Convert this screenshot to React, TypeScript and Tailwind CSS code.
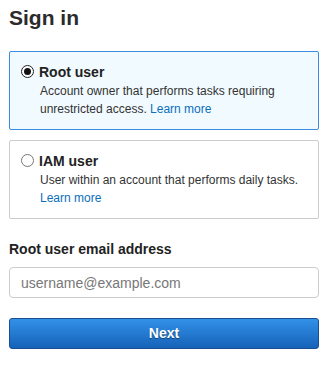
const Radio = ({ checked }: { checked?: boolean }) => (
  <span
    className={
      "mt-[3px] flex h-[13px] w-[13px] shrink-0 items-center justify-center rounded-full border bg-white " +
      (checked ? "border-[#222]" : "border-[#767676]")
    }
  >
    {checked && <span className="h-[7px] w-[7px] rounded-full bg-[#111]" />}
  </span>
);

const Option = ({
  checked,
  title,
  children,
}: {
  checked?: boolean;
  title: string;
  children: React.ReactNode;
}) => (
  <div
    className={
      "flex gap-[5px] rounded-[2px] border pl-[11px] pr-[10px] pt-[10px] pb-[11px] " +
      (checked ? "border-[#3b8de3] bg-[#f1faff]" : "border-[#cccccc] bg-white")
    }
  >
    <Radio checked={checked} />
    <div>
      <div className="text-[14px] font-bold leading-[20px] text-[#222]">{title}</div>
      <p className="pl-[1px] text-[12px] leading-[18px] text-[#333]">{children}</p>
    </div>
  </div>
);

export default function App() {
  return (
    <div
      className="min-h-[365px] bg-white pl-[9px] pr-[8px] pt-[4px]"
      style={{ fontFamily: '"Liberation Sans", Arial, sans-serif' }}
    >
      <h1 className="text-[21px] font-bold leading-[28px] text-[#2b2b2b]">Sign in</h1>

      <div className="mt-[19px] flex flex-col gap-[10px]">
        <Option checked title="Root user">
          Account owner that performs tasks requiring
          <br />
          unrestricted access.{" "}
          <a href="#" className="text-[#0a6ebd]">
            Learn more
          </a>
        </Option>
        <Option title="IAM user">
          User within an account that performs daily tasks.
          <br />
          <a href="#" className="text-[#0a6ebd]">
            Learn more
          </a>
        </Option>
      </div>

      <label className="mt-[20px] block text-[14px] font-bold leading-[20px] text-[#222]">
        Root user email address
      </label>
      <input
        type="email"
        placeholder="username@example.com"
        className="mt-[8px] block h-[31px] w-full rounded-[4px] border border-[#cccccc] px-[11px] text-[14px] text-[#222] outline-none placeholder:text-[#777]"
      />

      <button className="mt-[20px] block h-[31px] w-full rounded-[3px] border border-[#1a4f91] bg-gradient-to-b from-[#3391e8] to-[#1563b8] text-[14px] font-bold text-white [text-shadow:0_1px_1px_rgba(0,0,0,0.45)]">
        Next
      </button>
    </div>
  );
}
